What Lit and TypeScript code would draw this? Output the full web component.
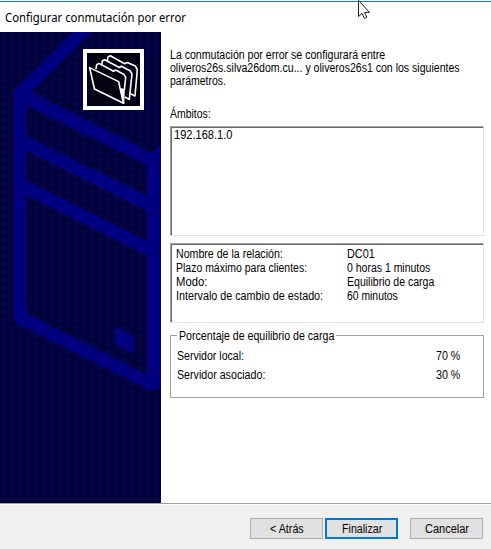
import { LitElement, html, css } from "lit";
import { customElement, property } from "lit/decorators.js";

/** A one-line label condensed or widened to a given advance width. */
@customElement("ui-label")
export class UiLabel extends LitElement {
  @property() text = "";
  @property({ type: Number }) width = 0;

  static styles = css`
    :host { display: block; white-space: nowrap; }
    .text { display: inline-block; transform-origin: 0 50%; }
  `;

  updated() {
    const el = this.renderRoot.querySelector<HTMLElement>(".text");
    if (!el || !this.width) return;
    this.style.width = `${this.width}px`;
    el.style.transform = `scaleX(${this.width / el.offsetWidth})`;
  }

  render() {
    return html`<span class="text">${this.text}</span>`;
  }
}

const label = (text: string, width: number) =>
  html`<ui-label .text=${text} .width=${width}></ui-label>`;

@customElement("wizard-banner")
export class WizardBanner extends LitElement {
  static styles = css`
    :host { display: block; width: 161px; height: 471px; }
    svg { display: block; }
  `;

  render() {
    return html`
      <svg width="161" height="471" viewBox="0 32 161 471">
        <defs>
          <pattern id="checker" width="2" height="2" patternUnits="userSpaceOnUse">
            <path fill="#000" d="M0 0h2v2H0z" />
            <path fill="#000080" d="M0 0h1v1H0zM1 1h1v1H1z" />
          </pattern>
          <pattern id="dots" width="4" height="4" patternUnits="userSpaceOnUse">
            <path fill="#000" d="M0 0h4v4H0z" />
            <path fill="#000080" d="M1 0h1v1H1zM3 2h1v1H3z" />
          </pattern>
        </defs>
        <rect y="32" width="161" height="471" fill="url(#checker)" shape-rendering="crispEdges" />
        <g fill="#000080" shape-rendering="crispEdges">
          <path fill-rule="evenodd" d="M73 32H91L31 92L152 153L161 145V386L156 390H150L20 325L14 321V90Z
            M26 105V136L147 196V165Z M26 150.5V180L147 241V211Z M26 194.5V313L147 375V255Z" />
          <path d="M115 326.5L134 336V354L115 344Z" />
        </g>
        <g shape-rendering="crispEdges">
          <rect x="83" y="49" width="61" height="61" fill="#fff" />
          <rect x="87" y="53" width="53" height="53" fill="url(#dots)" />
        </g>
        <g fill="none" stroke="#fff" stroke-width="1.6" stroke-linejoin="round">
          <path d="M107.3 61.7L108 57L110.3 55.8L124.7 63.7L127.3 62.5L135.3 66L137.3 69.7L135 96L130.7 93.7" />
          <path d="M101.7 65.3L102.3 61L104.7 59.7L119.3 67.5L121.3 66.3L130 70.7L132 74L129.3 99.3L124.7 97" />
          <path d="M96 69L96.6 64.8L99 63.4L113.5 71.2L115.7 70L124 74.5L125.7 77.5L124.3 90" />
          <path d="M89.6 67.6L118.7 81.6L120 88L123.5 103.2L94.5 89Z" />
          <path fill="#fff" stroke="none" d="M120 88L124.8 89L124.3 104H122.8Z" />
        </g>
      </svg>
    `;
  }
}

@customElement("app-root")
export class AppRoot extends LitElement {
  static styles = css`
    :host {
      display: flex; flex-direction: column; position: relative;
      width: 491px; height: 549px; box-sizing: border-box; overflow: hidden;
      background: #fff; color: #000;
      font: 12px/13px "Liberation Sans", Arial, sans-serif;
    }
    .title {
      height: 32px; box-sizing: border-box; padding: 10px 0 0 5px;
      background: linear-gradient(#fff 1px, #1979ca 1px, #1979ca 2px, #fff 2px);
      font: 12px/16px "Noto Sans", sans-serif;
    }
    .body { display: flex; height: 471px; }
    .content { width: 314px; padding: 17px 0 0 9px; }
    .scopes-caption { margin-top: 20px; }
    .sunken {
      box-sizing: border-box; border: 1px solid #a0a0a0;
      border-right-color: #e3e3e3; border-bottom-color: #e3e3e3;
      box-shadow: inset 1px 1px #696969;
    }
    .list { height: 110px; margin-top: 5px; padding: 2px 3px; }
    .details {
      display: grid; grid-template-columns: 171px auto; grid-auto-rows: 14px;
      align-content: start; height: 80px; margin-top: 7px; padding: 3px 5px; line-height: 14px;
    }
    .group {
      box-sizing: border-box; height: 63px; margin: 12px 0 0; padding: 0 23px 0 6px;
      border: 1px solid #a0a0a0;
    }
    .legend { width: 159px; height: 13px; margin-top: -6px; padding-left: 2px; box-sizing: border-box; background: #fff; }
    .row { display: flex; justify-content: space-between; margin-top: 7px; height: 13px; }
    .row + .row { margin-top: 6px; }
    .footer {
      display: flex; justify-content: flex-end; height: 46px; box-sizing: border-box;
      padding: 13px 8px 0 0; gap: 2px;
      border-top: 1px solid #a0a0a0; background: #f0f0f0; box-shadow: inset 0 1px #fff;
    }
    .button {
      display: flex; align-items: center; justify-content: center;
      width: 73px; height: 21px; box-sizing: border-box; margin: 1px 0 0; padding: 1px 0 0;
      border: 1px solid #adadad; background: #e1e1e1; color: #000; font: inherit;
    }
    .default { border: 2px solid #0078d7; }
    .cancel { margin-left: 10px; }
    .cursor { position: absolute; left: 357px; top: 0; }
  `;

  render() {
    return html`
      <div class="title">${label("Configurar conmutación por error", 181)}</div>
      <div class="body">
        <wizard-banner></wizard-banner>
        <div class="content">
          ${label("La conmutación por error se configurará entre", 215)}
          ${label("oliveros26s.silva26dom.cu... y oliveros26s1 con los siguientes", 290)}
          ${label("parámetros.", 56)}
          <div class="scopes-caption">${label("Ámbitos:", 41)}</div>
          <div class="sunken list">${label("192.168.1.0", 58)}</div>
          <div class="sunken details">
            ${label("Nombre de la relación:", 107)}${label("DC01", 28)}
            ${label("Plazo máximo para clientes:", 131)}${label("0 horas 1 minutos", 83)}
            ${label("Modo:", 31)}${label("Equilibrio de carga", 87)}
            ${label("Intervalo de cambio de estado:", 147)}${label("60 minutos", 51)}
          </div>
          <div class="group">
            <div class="legend">${label("Porcentaje de equilibrio de carga", 155)}</div>
            <div class="row">${label("Servidor local:", 67)}${label("70 %", 24)}</div>
            <div class="row">${label("Servidor asociado:", 88)}${label("30 %", 24)}</div>
          </div>
        </div>
      </div>
      <div class="footer">
        <button class="button">${label("< Atrás", 34)}</button>
        <button class="button default">${label("Finalizar", 40)}</button>
        <button class="button cancel">${label("Cancelar", 44)}</button>
      </div>
      <svg class="cursor" width="14" height="20" viewBox="357 0 14 20">
        <path fill="#fff" stroke="#1c1c28" d="M358.5 .3V16.5L362 13.3L364.4 18.4L366.8 17.4L364.6 12.4H369.5Z" />
      </svg>
    `;
  }
}
